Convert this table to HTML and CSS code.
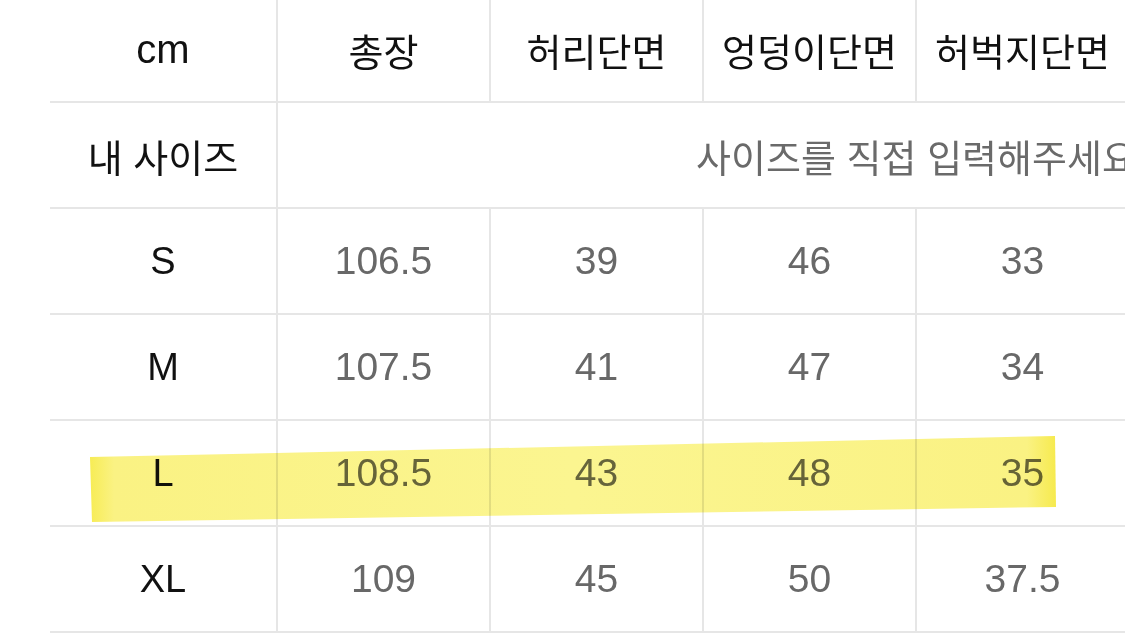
FILE: index.html
```html
<!DOCTYPE html>
<html lang="ko">
<head>
<meta charset="utf-8">
<title>사이즈표</title>
<link rel="stylesheet" href="styles.css">
</head>
<body>
<div class="page">
  <table class="size-table">
    <colgroup>
      <col class="c-label">
      <col class="c-val"><col class="c-val"><col class="c-val"><col class="c-val"><col class="c-val"><col class="c-val">
    </colgroup>
    <thead>
      <tr class="row head">
        <th class="label">cm</th>
        <th>총장</th>
        <th>허리단면</th>
        <th>엉덩이단면</th>
        <th>허벅지단면</th>
        <th>밑위</th>
        <th>밑단단면</th>
      </tr>
    </thead>
    <tbody>
      <tr class="row">
        <td class="label">내 사이즈</td>
        <td class="input" colspan="6">사이즈를 직접 입력해주세요</td>
      </tr>
      <tr class="row">
        <td class="label">S</td><td>106.5</td><td>39</td><td>46</td><td>33</td><td>30</td><td>26</td>
      </tr>
      <tr class="row">
        <td class="label">M</td><td>107.5</td><td>41</td><td>47</td><td>34</td><td>31</td><td>27</td>
      </tr>
      <tr class="row">
        <td class="label">L</td><td>108.5</td><td>43</td><td>48</td><td>35</td><td>32</td><td>28</td>
      </tr>
      <tr class="row">
        <td class="label">XL</td><td>109</td><td>45</td><td>50</td><td>37.5</td><td>33</td><td>29</td>
      </tr>
    </tbody>
  </table>
  <svg class="highlight" width="1125" height="636" viewBox="0 0 1125 636" aria-hidden="true">
    <defs>
      <linearGradient id="hl" x1="90" y1="0" x2="1056" y2="0" gradientUnits="userSpaceOnUse">
        <stop offset="0" stop-color="#f7ec55"/>
        <stop offset="0.025" stop-color="#faf283"/>
        <stop offset="0.5" stop-color="#fbf590"/>
        <stop offset="0.97" stop-color="#faf283"/>
        <stop offset="1" stop-color="#f6ea4e"/>
      </linearGradient>
    </defs>
    <polygon points="90,457 1055,436 1056,507 92,522" fill="url(#hl)"/>
  </svg>
</div>
</body>
</html>
```
FILE: styles.css
```css
html, body {
  margin: 0;
  padding: 0;
  background: #ffffff;
}

body {
  width: 1125px;
  height: 636px;
  overflow: hidden;
  font-family: "Liberation Sans", "Noto Sans CJK KR", sans-serif;
}

.page {
  position: relative;
  width: 1125px;
  height: 636px;
  overflow: hidden;
}

.size-table {
  border-collapse: collapse;
  table-layout: fixed;
  margin-left: 50px;
  margin-top: -3px;
  width: 1505px;
}

.c-label { width: 227px; }
.c-val { width: 213px; }

.row th,
.row td {
  height: 104px;
  padding: 0;
  text-align: center;
  vertical-align: middle;
  border-bottom: 2px solid #e6e6e6;
  font-weight: normal;
  white-space: nowrap;
}

.row th + th,
.row td + td {
  border-left: 2px solid #e6e6e6;
}

.head th {
  font-size: 38px;
  color: #111111;
  font-family: "Noto Sans CJK KR", "Liberation Sans", sans-serif;
}

.head th.label {
  font-family: "Liberation Sans", sans-serif;
  font-size: 40px;
}

.row td {
  font-size: 39px;
  color: #686868;
}

.row td.label {
  color: #111111;
  font-size: 38px;
}

.row td.input {
  font-size: 38px;
  color: #6a6a6a;
  font-family: "Noto Sans CJK KR", "Liberation Sans", sans-serif;
}

.highlight {
  position: absolute;
  left: 0;
  top: 0;
  mix-blend-mode: multiply;
  pointer-events: none;
}
```
